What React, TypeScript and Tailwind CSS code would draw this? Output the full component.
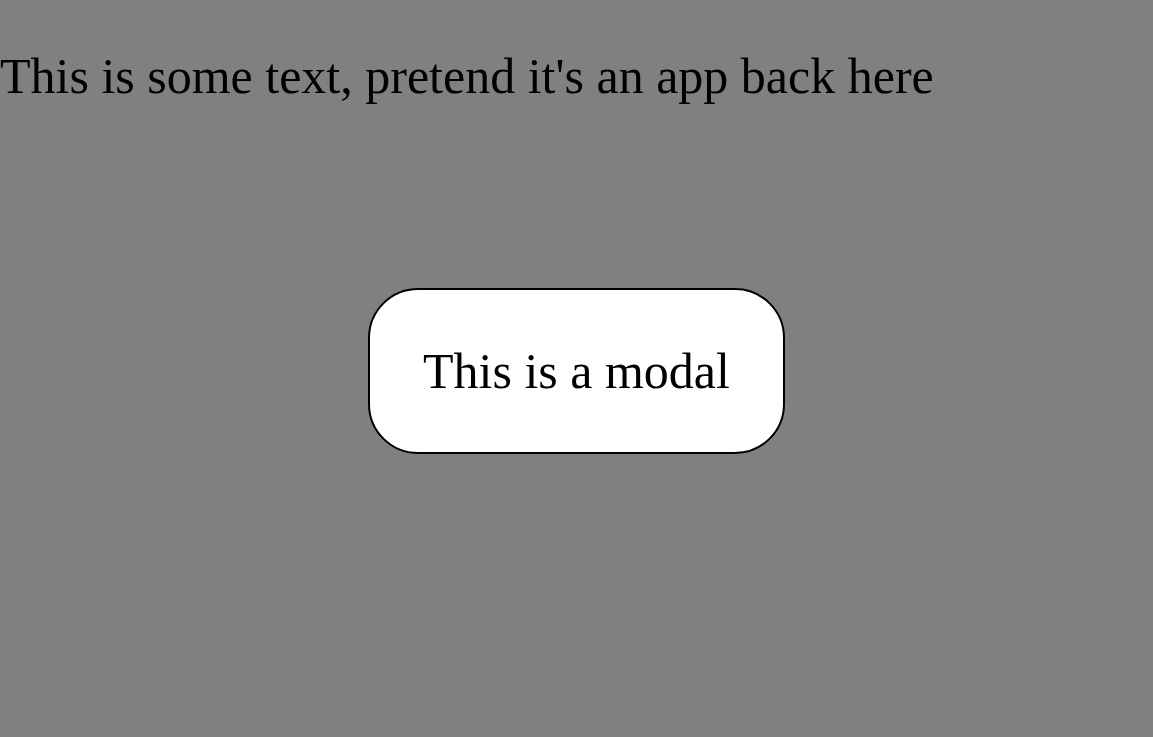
import React from "react";

export default function App() {
  return (
    <div className="relative w-full h-screen bg-[#808080] overflow-hidden font-['Liberation_Serif','Times_New_Roman',serif] text-black">
      <p className="m-0 pt-[47px] text-[50px] leading-[normal]">
        This is some text, pretend it's an app back here
      </p>
      <div className="absolute inset-0 flex items-center justify-center pt-[4px]">
        <div className="bg-white border-2 border-black rounded-[50px] px-[53px] py-[52px]">
          <p className="m-0 text-[50px] leading-[normal]">This is a modal</p>
        </div>
      </div>
    </div>
  );
}
